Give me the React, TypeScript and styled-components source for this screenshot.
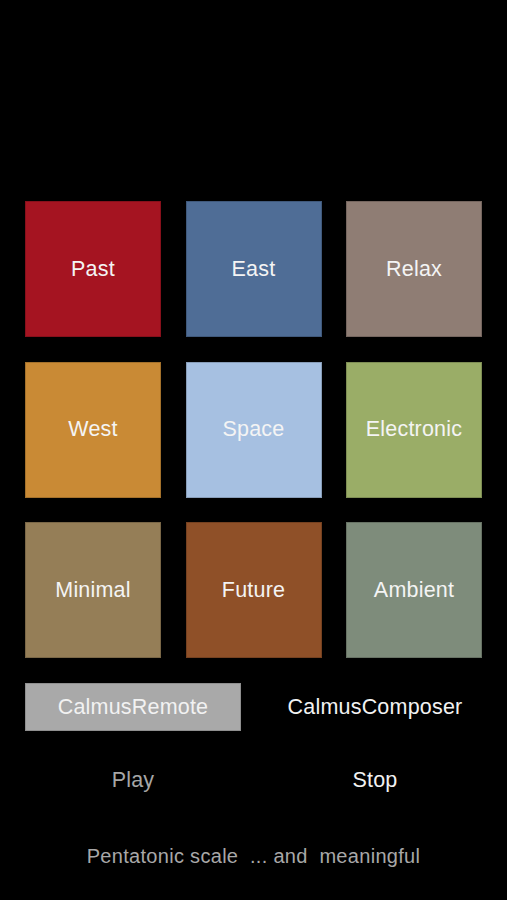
import React from "react";
import styled, { createGlobalStyle } from "styled-components";

const Global = createGlobalStyle`
  html, body { margin: 0; padding: 0; background: #000; }
  body { font-family: "Liberation Sans", Arial, sans-serif; }
`;

const Screen = styled.div`
  width: 507px;
  height: 900px;
  background: #000;
  box-sizing: border-box;
  padding: 201px 25px 0 25px;
  display: flex;
  flex-direction: column;
`;

const Grid = styled.div`
  display: grid;
  grid-template-columns: repeat(3, 136px);
  grid-auto-rows: 136px;
  column-gap: 24.5px;
  row-gap: 24.5px;
`;

const Tile = styled.button<{ $bg: string }>`
  background: ${(p) => p.$bg};
  border: 1px solid rgba(0, 0, 0, 0.18);
  margin: 0;
  padding: 0;
  display: flex;
  align-items: center;
  justify-content: center;
  color: #f4f4f4;
  font-family: "Liberation Sans", Arial, sans-serif;
  font-size: 21.5px;
  letter-spacing: 0.2px;
`;

const ModeRow = styled.div`
  display: grid;
  grid-template-columns: 216px 216px;
  column-gap: 26px;
  margin-top: 25px;
  height: 48px;
`;

const ModeButton = styled.button<{ $active?: boolean }>`
  background: ${(p) => (p.$active ? "#a9a9a9" : "transparent")};
  border: ${(p) => (p.$active ? "1px solid #8f8f8f" : "none")};
  margin: 0;
  padding: 0;
  color: #f2f2f2;
  font-family: "Liberation Sans", Arial, sans-serif;
  font-size: 21.5px;
  letter-spacing: 0.2px;
`;

const ControlRow = styled.div`
  display: grid;
  grid-template-columns: 216px 216px;
  column-gap: 26px;
  height: 50px;
  margin-top: 24px;
  align-items: center;
`;

const ControlButton = styled.button<{ $dim?: boolean }>`
  background: transparent;
  border: none;
  margin: 0;
  padding: 0;
  color: ${(p) => (p.$dim ? "#a6a6a6" : "#f2f2f2")};
  font-family: "Liberation Sans", Arial, sans-serif;
  font-size: 21.5px;
  letter-spacing: 0.2px;
`;

const Footer = styled.div`
  margin-top: 39px;
  width: 457px;
  text-align: center;
  color: #a8a8a8;
  font-size: 20px;
  line-height: 24px;
  white-space: pre;
  letter-spacing: 0.3px;
`;

const tiles = [
  { label: "Past", bg: "#a51421" },
  { label: "East", bg: "#4f6d96" },
  { label: "Relax", bg: "#8f7d74" },
  { label: "West", bg: "#c98a35" },
  { label: "Space", bg: "#a6c0e1" },
  { label: "Electronic", bg: "#9aad67" },
  { label: "Minimal", bg: "#957e57" },
  { label: "Future", bg: "#8f5028" },
  { label: "Ambient", bg: "#7e8c7b" },
];

export default function App() {
  return (
    <>
      <Global />
      <Screen>
        <Grid>
          {tiles.map((t) => (
            <Tile key={t.label} $bg={t.bg}>
              {t.label}
            </Tile>
          ))}
        </Grid>
        <ModeRow>
          <ModeButton $active>CalmusRemote</ModeButton>
          <ModeButton>CalmusComposer</ModeButton>
        </ModeRow>
        <ControlRow>
          <ControlButton $dim>Play</ControlButton>
          <ControlButton>Stop</ControlButton>
        </ControlRow>
        <Footer>{"Pentatonic scale  ... and  meaningful"}</Footer>
      </Screen>
    </>
  );
}
